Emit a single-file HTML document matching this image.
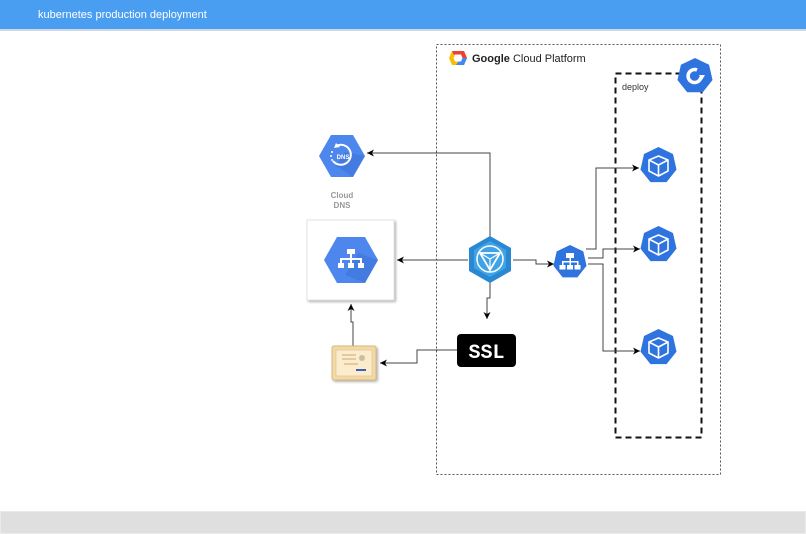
<!DOCTYPE html>
<html><head><meta charset="utf-8"><style>
html,body{margin:0;padding:0;width:806px;height:534px;overflow:hidden;background:#fff;font-family:"Liberation Sans",sans-serif}
svg{position:absolute;left:0;top:0}
</style></head><body>
<svg width="806" height="534" viewBox="0 0 806 534" xmlns="http://www.w3.org/2000/svg">
<defs>
<marker id="a" markerWidth="8" markerHeight="8" refX="7" refY="4" orient="auto" markerUnits="userSpaceOnUse"><path d="M0,0.5 L7,4 L0,7.5 L2,4 Z" fill="#000"/></marker>
<filter id="sh" x="-10%" y="-10%" width="130%" height="130%"><feDropShadow dx="1.5" dy="1.5" stdDeviation="1.2" flood-color="#000" flood-opacity="0.3"/></filter>
<symbol id="hept" viewBox="-1 -1 2 2"><polygon points="0,-1 0.782,-0.623 0.975,0.223 0.434,0.901 -0.434,0.901 -0.975,0.223 -0.782,-0.623" fill="#2f74de"/></symbol>
</defs>
<!-- header -->
<rect x="0" y="0" width="806" height="29" fill="#4a9ef2"/>
<rect x="0" y="29" width="806" height="2" fill="#cfd8e3"/>
<text x="38" y="18" font-size="11" fill="#fff">kubernetes production deployment</text>
<!-- footer -->
<rect x="0.5" y="511.5" width="805" height="22" fill="#dfdfdf" stroke="#ebebeb"/>
<!-- GCP box -->
<rect x="436.5" y="44.5" width="284" height="430" fill="none" stroke="#555" stroke-dasharray="2,2"/>
<g transform="translate(458,58)">
<polygon points="-6,-7 6,-7 9,0 6,7 -6,7 -9,0" fill="#fbbc05"/>
<polygon points="-6,-7 6,-7 9,0 3,0 1,-3 -4,-3" fill="#ea4335"/>
<polygon points="9,0 6,7 -2,7 1,3 3,0" fill="#4285f4"/>
<polygon points="-3,-3.5 3,-3.5 4.5,0 3,3.5 -3,3.5 -4.5,0" fill="#fff"/>
</g>
<text x="472" y="62" font-size="11" fill="#222"><tspan font-weight="bold">Google</tspan> Cloud Platform</text>
<!-- deploy box -->
<rect x="615.5" y="73.5" width="86" height="364" fill="none" stroke="#111" stroke-width="2" stroke-dasharray="6,4"/>
<text x="622" y="90" font-size="9" fill="#333">deploy</text>
<use href="#hept" x="677" y="58" width="36" height="36"/>
<path d="M701,77 A6.5,6.5 0 1 1 697,70" fill="none" stroke="#fff" stroke-width="3.5"/>
<polygon points="699,75 705,75 702,80" fill="#fff"/>
<!-- connectors -->
<g fill="none" stroke="#444" stroke-width="1">
<path d="M490,238 V153 H367" marker-end="url(#a)"/>
<path d="M468,260 H397" marker-end="url(#a)"/>
<path d="M490,282 V298 H487 V319" marker-end="url(#a)"/>
<path d="M457,350 H417 V363 H380" marker-end="url(#a)"/>
<path d="M353,346 V322 H351 V304" marker-end="url(#a)"/>
<path d="M513,260 H536 V264 H554" marker-end="url(#a)"/>
<path d="M586,249 H596 V168 H639" marker-end="url(#a)"/>
<path d="M588,258 H603 V249 H640" marker-end="url(#a)"/>
<path d="M588,264 H603 V351 H640" marker-end="url(#a)"/>
</g>
<!-- DNS -->
<polygon points="319,156 331,135 353,135 365,156 353,177 331,177" fill="#4d86ec"/>
<path d="M345,152 L365,156 L353,177 L336,166 Z" fill="#3f74d8" opacity="0.6"/>
<path d="M336,146 A10,10 0 1 1 333,161" fill="none" stroke="#fff" stroke-width="2"/>
<polygon points="336,143 340,147 334,148" fill="#fff"/>
<text x="343" y="159" font-size="6" font-weight="bold" fill="#fff" text-anchor="middle">DNS</text>
<circle cx="332" cy="152" r="1" fill="#fff"/><circle cx="331" cy="156" r="1" fill="#fff"/><circle cx="332" cy="160" r="1" fill="#fff"/>
<text x="342" y="198" font-size="8" font-weight="bold" fill="#999" text-anchor="middle">Cloud</text>
<text x="342" y="208" font-size="8" font-weight="bold" fill="#999" text-anchor="middle">DNS</text>
<!-- LB box -->
<rect x="307" y="220" width="87" height="80" fill="#fff" stroke="#e3e3e3" filter="url(#sh)"/>
<polygon points="324,260 337,237 365,237 378,260 365,283 337,283" fill="#4d86ec"/>
<path d="M358,253 L378,260 L365,283 L345,275 Z" fill="#3f74d8" opacity="0.6"/>
<g fill="#fff"><rect x="347" y="249" width="8" height="5"/><rect x="350" y="254" width="2" height="4"/><rect x="340" y="258" width="22" height="2"/><rect x="340" y="258" width="2" height="5"/><rect x="350" y="258" width="2" height="5"/><rect x="360" y="258" width="2" height="5"/><rect x="338" y="263" width="6" height="5"/><rect x="348" y="263" width="6" height="5"/><rect x="358" y="263" width="6" height="5"/></g>
<!-- ingress -->
<polygon points="490,236 511,248 511,271 490,283 469,271 469,248" fill="#2a88d3"/>
<polygon points="490,241 506,250 506,268 490,277 474,268 474,250" fill="#3fa3e6"/>
<circle cx="490" cy="259" r="13" fill="none" stroke="#fff" stroke-width="1.5"/>
<polygon points="480,253 500,253 490,270" fill="none" stroke="#fff" stroke-width="1.8"/>
<path d="M490,259 L480,253 M490,259 L500,253 M490,259 V270" stroke="#fff" stroke-width="1.2"/>
<!-- SSL -->
<rect x="457" y="334" width="59" height="33" rx="4" fill="#000"/>
<text x="486.5" y="358" font-size="20" font-weight="bold" fill="#fff" text-anchor="middle" font-family="Liberation Mono,monospace">SSL</text>
<!-- certificate -->
<rect x="332" y="346" width="44" height="34" rx="2" fill="#f1d9a8" stroke="#dcb77a" filter="url(#sh)"/>
<rect x="336" y="350" width="36" height="26" fill="#faeccc" stroke="#e0c48c" stroke-width="0.7"/>
<circle cx="362" cy="358" r="3" fill="#c9bfa0"/>
<path d="M342,355 H356 M342,359 H356 M344,364 H358" stroke="#c9a870" stroke-width="1"/>
<path d="M356,370 H366" stroke="#3d5fb0" stroke-width="2"/>
<!-- service -->
<use href="#hept" x="553" y="245" width="34" height="34"/>
<g fill="#fff"><rect x="566" y="253" width="8" height="5"/><rect x="569.5" y="258" width="1.5" height="3"/><rect x="562" y="261" width="16" height="1.5"/><rect x="562" y="261" width="1.5" height="4"/><rect x="569.5" y="261" width="1.5" height="4"/><rect x="577" y="261" width="1.5" height="4"/><rect x="559.5" y="265" width="6" height="4.5"/><rect x="567" y="265" width="6" height="4.5"/><rect x="574.5" y="265" width="6" height="4.5"/></g>
<!-- pods -->
<g id="pod">
<use href="#hept" x="640" y="147" width="37" height="37"/>
<g fill="none" stroke="#fff" stroke-width="1.6" stroke-linejoin="round"><polygon points="658.5,156 668,160 668,171 658.5,176 649,171 649,160"/><path d="M649,160 L658.5,165 L668,160 M658.5,165 V176"/></g>
</g>
<use href="#pod" x="0" y="79"/>
<use href="#pod" x="0" y="182"/>
</svg>
</body></html>
